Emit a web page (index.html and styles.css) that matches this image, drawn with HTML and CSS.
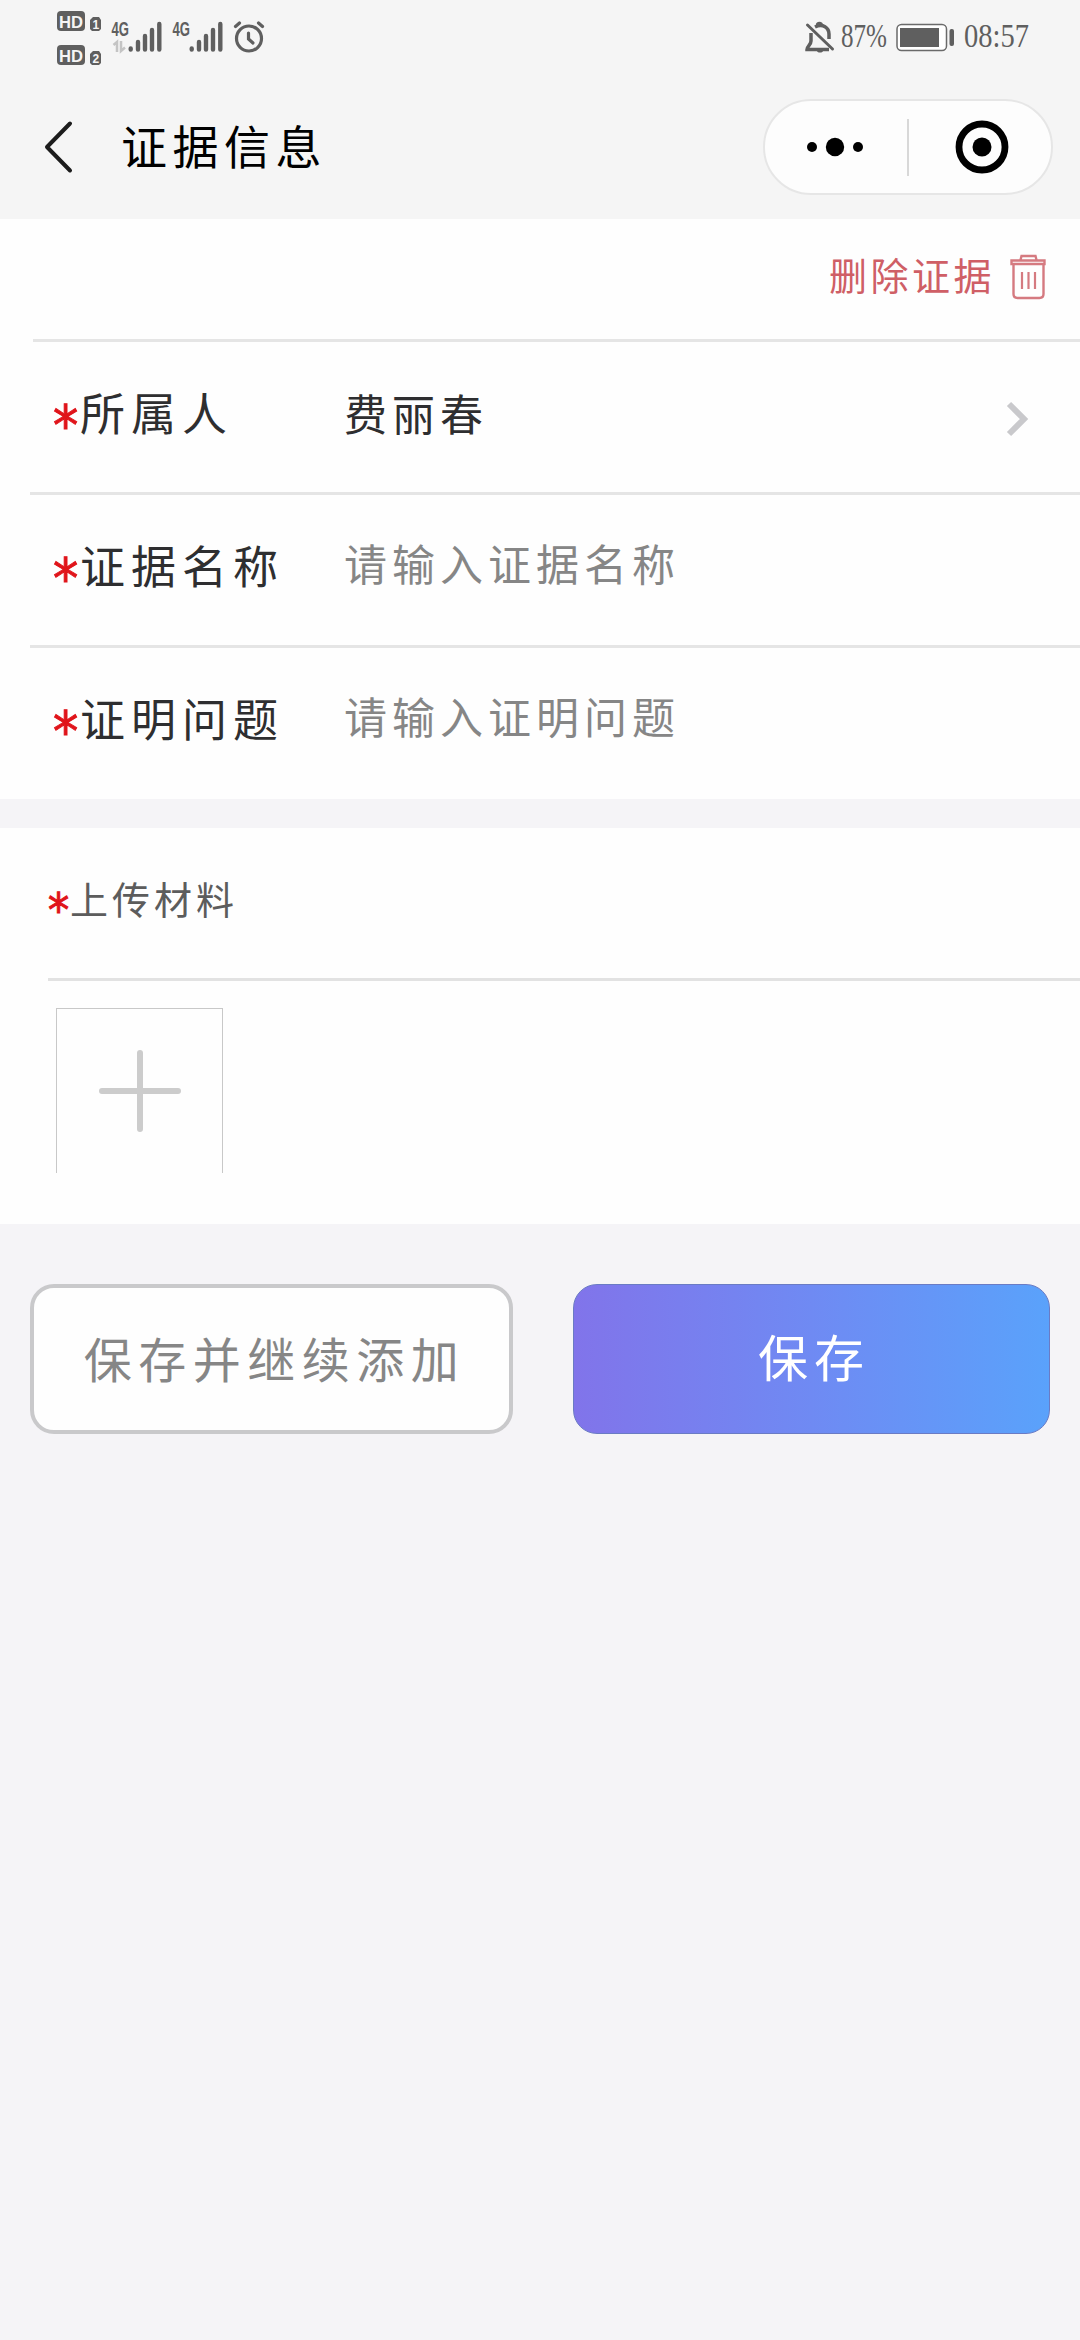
FILE: index.html
```html
<!DOCTYPE html>
<html lang='zh-CN'>
<head>
	<meta charset='UTF-8'>
	<meta name='viewport' content='width=device-width, initial-scale=1.0'>
	<title>证据信息</title>
	<link rel="stylesheet" href="styles.css">
</head>
<body>
	<div class='status-bar'>
		<svg class='status-left' width='210' height='60' viewBox='57 6 210 60'>
			<g fill='#5f5f5f'>
				<rect x='57' y='11' width='28' height='20' rx='4'/>
				<path d='M90 20l3-3h6l2 3v9l-2 2h-7l-2-2z'/>
				<rect x='57' y='45' width='28' height='20' rx='4'/>
				<path d='M90 54l3-3h6l2 3v9l-2 2h-7l-2-2z'/>
			</g>
			<g class='badge-text'>
				<text x='59' y='27.5' font-size='17' textLength='24' lengthAdjust='spacingAndGlyphs'>HD</text>
				<text x='92.5' y='29' font-size='12'>1</text>
				<text x='59' y='61.5' font-size='17' textLength='24' lengthAdjust='spacingAndGlyphs'>HD</text>
				<text x='92.5' y='63' font-size='12'>2</text>
			</g>
			<g class='net-text'>
				<text x='111.5' y='36' textLength='17.5' lengthAdjust='spacingAndGlyphs'>4G</text>
				<text x='172.5' y='36' textLength='17.5' lengthAdjust='spacingAndGlyphs'>4G</text>
			</g>
			<path d='M113.5 45l3.500-3v10M121 41v10l4-3.500' fill='none' stroke='#c4c4c4' stroke-width='2.500'/>
			<g stroke='#5f5f5f' stroke-width='4.400' stroke-linecap='round' fill='none'>
				<path d='M130.700 48.500v1M138 42v7.500M145 36v13.500M152 30v19.500M159.300 24v25.500'/>
				<path d='M191.700 48.500v1M199 42v7.500M206 36v13.500M213 30v19.500M220.300 24v25.500'/>
				<circle cx='249' cy='38.500' r='12.500' stroke-width='3.200'/>
				<path d='M248.500 33v6l4.500 4' stroke-width='3.200'/>
				<path d='M235.500 26.500l4-3.500M258.500 23l4 3.500' stroke-width='3.200'/>
			</g>
		</svg>
		<svg class='status-right' width='236' height='40' viewBox='804 17 236 40'>
			<g fill='none' stroke='#5f5f5f' stroke-width='3.500'>
				<path d='M811 33v8c0 4-4 5-4 8.500h22'/>
				<path d='M815 27c8-4 14 1 14 7v5'/>
				<path d='M817 27v-1.500a2.500 2.500 0 0 1 5 0V27' stroke-width='2.500'/>
				<path d='M807.500 25l25 24' stroke-linecap='round' stroke-width='3'/>
			</g>
			<path d='M817 50.500h6a3 2 0 0 1-6 0z' fill='#5f5f5f'/>
			<rect x='897' y='24.500' width='49.500' height='26' rx='4.500' fill='#fff' stroke='#6a6a6a' stroke-width='1.500'/>
			<rect x='900' y='28' width='39' height='19' fill='#5f5f5f'/>
			<rect x='949.500' y='29' width='4.500' height='17' rx='2' fill='#5f5f5f'/>
			<g class='clock-text'>
				<text x='841' y='47' textLength='46' lengthAdjust='spacingAndGlyphs'>87%</text>
				<text x='964' y='47' textLength='65' lengthAdjust='spacingAndGlyphs'>08:57</text>
			</g>
		</svg>
	</div>

	<div class='nav-bar'>
		<svg class='back' width='30' height='54' viewBox='0 0 30 54'>
			<path d='M26 3.500L3 27l23 23.500' fill='none' stroke='#1c1c1c' stroke-width='4' stroke-linecap='round' stroke-linejoin='round'/>
		</svg>
		<div class='title'>证据信息</div>
		<div class='capsule'>
			<svg class='more' width='60' height='20' viewBox='0 0 60 20'>
				<circle cx='7' cy='10' r='5'/>
				<circle cx='30' cy='10' r='9.200'/>
				<circle cx='53' cy='10' r='5'/>
			</svg>
			<div class='capsule-line'></div>
			<svg class='target' width='54' height='54' viewBox='0 0 54 54'>
				<circle cx='27' cy='27' r='23' fill='none' stroke='#000' stroke-width='6.800'/>
				<circle cx='27' cy='27' r='9.500'/>
			</svg>
		</div>
	</div>

	<div class='form-box'>
		<div class='delete-row'>
			<span class='delete-label'>删除证据</span>
			<svg class='trash' width='36' height='46' viewBox='0 0 36 46'>
				<g fill='none' stroke='#d57a80' stroke-width='2.400'>
					<path d='M1.500 6.500h33v3.500h-33zM10.500 6l1-4h14l1 4'/>
					<path d='M3.500 10v30q0 4 4 4h22q4 0 4-4V10'/>
					<path d='M12 18v17M18.500 18v17M25 18v17' stroke-width='2.200'/>
				</g>
			</svg>
		</div>
		<div class='form-row first'>
			<div class='label'><span class='star'>*</span>所属人</div>
			<div class='value'>费丽春</div>
			<svg class='arrow' width='24' height='40' viewBox='0 0 24 40'>
				<path d='M3 5l15 15L3 35' fill='none' stroke='#c9c9cc' stroke-width='6'/>
			</svg>
		</div>
		<div class='form-row'>
			<div class='label'><span class='star'>*</span>证据名称</div>
			<div class='value placeholder'>请输入证据名称</div>
		</div>
		<div class='form-row'>
			<div class='label'><span class='star'>*</span>证明问题</div>
			<div class='value placeholder'>请输入证明问题</div>
		</div>
	</div>

	<div class='upload-box'>
		<div class='upload-title'><span class='star'>*</span>上传材料</div>
		<div class='upload-add'>
			<svg width='82' height='82' viewBox='0 0 82 82'>
				<path d='M41 3v76M3 41h76' stroke='#ccc' stroke-width='6' stroke-linecap='round'/>
			</svg>
		</div>
	</div>

	<div class='button-box'>
		<div class='btn save-more'>保存并继续添加</div>
		<div class='btn save'>保存</div>
	</div>
</body>
</html>
```
FILE: styles.css
```css
html, body{
	width:100%;
	height:100%;
	margin:0;
}
*{
	box-sizing:border-box;
}
body{
	background-color:#f5f4f7;
	font-family:"Noto Sans CJK SC", sans-serif;
	overflow:hidden;
}
svg{
	display:block;
	flex:none;
}
.status-bar{
	display:flex;
	justify-content:space-between;
	align-items:flex-start;
	height:80px;
	padding:6px 40px 0 57px;
	background-color:#f5f5f5;
}
.status-right{
	margin-top:11px;
}
.badge-text{
	fill:#f5f5f5;
	font-family:"Liberation Sans", sans-serif;
	font-weight:bold;
}
.net-text{
	fill:#5f5f5f;
	font-family:"Liberation Sans", sans-serif;
	font-size:20px;
	font-weight:bold;
}
.clock-text{
	fill:#5f5f5f;
	font-family:"Liberation Serif", serif;
	font-size:34px;
}
.nav-bar{
	display:flex;
	align-items:center;
	height:139px;
	padding:0 27px 5px 44px;
	background-color:#f5f5f5;
}
.title{
	margin-left:47px;
	padding-bottom:7px;
	font-size:46px;
	line-height:60px;
	letter-spacing:5.500px;
	color:#000;
}
.capsule{
	display:flex;
	align-items:center;
	width:290px;
	height:96px;
	margin-left:auto;
	padding-left:40px;
	border:2px solid #e6e6e6;
	border-radius:48px;
	background-color:#fdfdfd;
}
.capsule-line{
	width:2px;
	height:57px;
	margin:0 46px 0 42px;
	background-color:#d8d8d8;
}
.form-box{
	height:580px;
	background-color:#fefefe;
}
.delete-row{
	display:flex;
	align-items:center;
	justify-content:flex-end;
	height:120px;
	padding:0 34px 4px 0;
}
.delete-label{
	margin-right:15px;
	padding-bottom:7px;
	font-size:38px;
	letter-spacing:3.5px;
	color:#cf5f66;
}
.form-row{
	display:flex;
	align-items:center;
	height:153px;
	margin-left:30px;
	padding:0 50px 3px 23px;
	border-top:3px solid #e5e5e5;
}
.form-row.first{
	margin-left:33px;
	padding-left:20px;
}
.label{
	display:flex;
	align-items:center;
	width:291px;
	padding-bottom:8px;
	font-size:45px;
	line-height:60px;
	letter-spacing:6px;
	color:#2e2e30;
}
.star{
	flex:none;
	width:27px;
	height:60px;
	padding-top:14px;
	font-family:"DejaVu Sans Condensed", "DejaVu Sans", sans-serif;
	font-stretch:condensed;
	font-size:56px;
	line-height:60px;
	letter-spacing:0;
	color:#e0141a;
	-webkit-text-stroke:1px #e0141a;
}
.value{
	padding-bottom:8px;
	font-size:43px;
	line-height:60px;
	letter-spacing:5px;
	color:#2e2e30;
}
.value.placeholder{
	padding-bottom:14px;
	color:#868686;
}
.arrow{
	margin:6px 0 0 auto;
}
.upload-box{
	height:396px;
	margin-top:29px;
	background-color:#fefefe;
}
.upload-title{
	display:flex;
	align-items:center;
	height:153px;
	margin-left:48px;
	padding-bottom:11px;
	border-bottom:3px solid #e2e2e2;
	font-size:38px;
	letter-spacing:4px;
	color:#5c5c5c;
}
.upload-title .star{
	width:22px;
	padding-top:12px;
	font-size:47px;
}
.upload-add{
	display:flex;
	align-items:center;
	justify-content:center;
	width:167px;
	height:165px;
	margin:27px 0 0 56px;
	border:1px solid #c8c8c8;
	border-bottom:none;
}
.button-box{
	display:flex;
	justify-content:space-between;
	padding:60px 30px 0 30px;
}
.btn{
	display:flex;
	align-items:center;
	justify-content:center;
	height:150px;
	border-radius:24px;
}
.save-more{
	width:483px;
	padding:0 0 4px 6px;
	border:4px solid #c9c9cb;
	background-color:#fefefe;
	font-size:48px;
	letter-spacing:6.500px;
	color:#868686;
}
.save{
	width:477px;
	padding:0 0 8px 5px;
	border:1px solid #6a7bc4;
	background:linear-gradient(to right, #8174ea, #6f8af3 50%, #5aa2fb);
	font-size:50px;
	letter-spacing:6px;
	color:#fff;
}
```
